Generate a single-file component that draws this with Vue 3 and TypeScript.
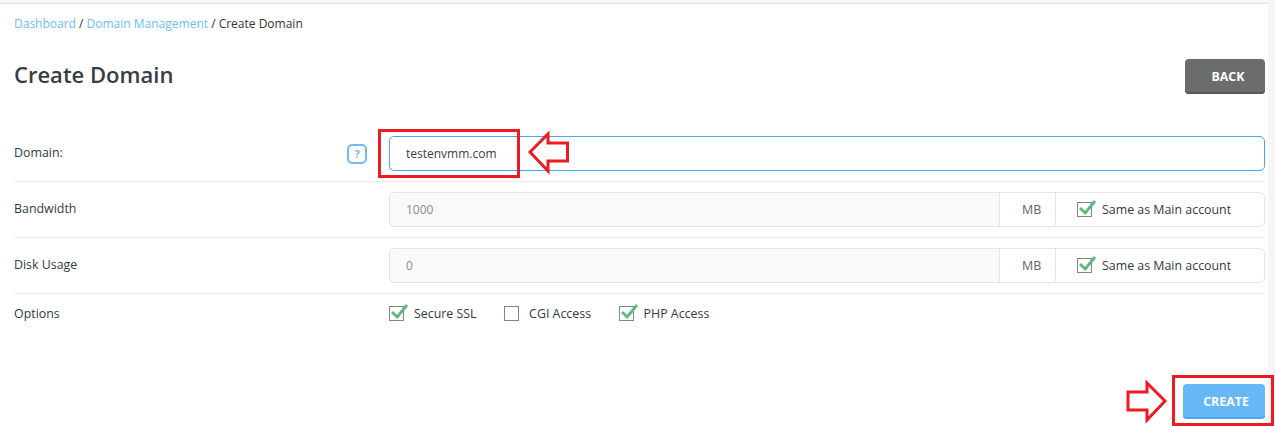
<script setup lang="ts">
interface Row { label: string; value: string }
const rows: Row[] = [
  { label: 'Bandwidth', value: '1000' },
  { label: 'Disk Usage', value: '0' },
]
const options = [
  { label: 'Secure SSL', checked: true },
  { label: 'CGI Access', checked: false },
  { label: 'PHP Access', checked: true },
]
</script>

<template>
  <div class="page">
    <main class="main">
      <nav class="crumbs"><a>Dashboard</a> / <a>Domain Management</a> / Create Domain</nav>
      <header class="head">
        <h1>Create Domain</h1>
        <button class="btn back">BACK</button>
      </header>
      <section class="form">
        <div class="row first">
          <label class="lbl">Domain:</label>
          <span class="help">?</span>
          <div class="domain">testenvmm.com</div>
        </div>
        <div v-for="r in rows" :key="r.label" class="row">
          <label class="lbl">{{ r.label }}</label>
          <div class="group">
            <div class="val">{{ r.value }}</div>
            <div class="unit">MB</div>
            <div class="same">
              <span class="cb">
                <svg class="tick" width="20" height="16" viewBox="0 0 20 16"><path d="M3 8 L8.2 13 L18 1" fill="none" stroke="#5cb97c" stroke-width="2.8"/></svg>
              </span>
              Same as Main account
            </div>
          </div>
        </div>
        <div class="row opts">
          <label class="lbl">Options</label>
          <div class="optlist">
            <div v-for="o in options" :key="o.label" class="opt">
              <span class="cb">
                <svg v-if="o.checked" class="tick" width="20" height="16" viewBox="0 0 20 16"><path d="M3 8 L8.2 13 L18 1" fill="none" stroke="#5cb97c" stroke-width="2.8"/></svg>
              </span>
              {{ o.label }}
            </div>
          </div>
        </div>
      </section>
      <footer class="foot"><button class="btn create">CREATE</button></footer>
    </main>

    <!-- annotations laid over the screenshot -->
    <div class="mark mark-domain"></div>
    <div class="mark mark-create"></div>
    <svg class="arrow arrow-left" width="44" height="44" viewBox="0 0 44 44">
      <path d="M3 21 L21 3 V12 H40.5 V30 H21 V40 Z" fill="#fff" stroke="#ed1c24" stroke-width="3"/>
    </svg>
    <svg class="arrow arrow-right" width="44" height="44" viewBox="0 0 44 44">
      <path d="M39 21 L21 3 V12 H2 V30 H21 V40 Z" fill="#fff" stroke="#ed1c24" stroke-width="3"/>
    </svg>
  </div>
</template>

<style>
html, body { margin: 0; background: #fff; }
</style>

<style scoped>
.page {
  position: relative;
  width: 1275px;
  height: 426px;
  overflow: hidden;
  background: #f6f6f6;
  font-family: "Open Sans", "Liberation Sans", sans-serif;
  color: #333a42;
}
.main {
  width: 1268px;
  height: 426px;
  box-sizing: border-box;
  background: #fff;
  margin-top: 3px;
  border-top: 1px solid #e4e4e4;
  padding: 0 3px 0 14px;
  font-size: 12px;
}
.crumbs { padding-top: 12px; line-height: 16px; font-size: 12px; color: #333; }
.crumbs a { color: #6fbcf7; }
.head {
  display: flex;
  justify-content: space-between;
  align-items: center;
  margin-top: 26px;
  height: 36px;
}
h1 { margin: 0 0 4px; font-size: 22px; font-weight: 600; color: #373d45; line-height: 32px; }
.btn {
  border: 0;
  border-radius: 4px;
  color: #fff;
  font: 700 12.4px "Open Sans", "Liberation Sans", sans-serif;
  width: 80px;
  height: 35px;
  padding: 0;
}
.back { background: #6b6d6c; box-shadow: inset 0 -2px 0 #585a59; padding-left: 6px; }
.form { margin-top: 33px; }
.row {
  display: flex;
  align-items: center;
  height: 55px;
  border-bottom: 1px solid #eaeaea;
}
.row.first { padding-top: 4px; box-sizing: border-box; height: 60px; margin-top: -5px; }
.lbl { width: 375px; flex: none; font-size: 12.4px; line-height: 16px; margin-bottom: 2px; color: #333a42; }
.first .lbl { width: 333px; }
.opts .lbl { margin-bottom: 0; margin-top: 1px; }
.help {
  box-sizing: border-box;
  width: 20px;
  height: 20px;
  margin-right: 22px;
  flex: none;
  border: 2.5px solid #6fbcf7;
  border-radius: 5px;
  color: #6fbcf7;
  font-size: 11px;
  font-weight: 700;
  line-height: 15px;
  text-align: center;
}
.domain {
  flex: 1;
  box-sizing: border-box;
  height: 35px;
  border: 1px solid #45a9f3;
  border-radius: 5px;
  padding-left: 16px;
  line-height: 33px;
  color: #3a4049;
}
.group {
  flex: 1;
  display: flex;
  height: 35px;
  box-sizing: border-box;
  border: 1px solid #e4e4e4;
  border-radius: 5px;
  line-height: 33px;
}
.val {
  flex: 1;
  background: #f9f9f9;
  color: #8b8b8b;
  padding-left: 16px;
  border-radius: 5px 0 0 5px;
}
.unit {
  width: 57px;
  box-sizing: border-box;
  border-left: 1px solid #e4e4e4;
  border-right: 1px solid #e4e4e4;
  padding-left: 22px;
  color: #5c636b;
  font-size: 12.4px;
}
.same {
  width: 208px;
  display: flex;
  align-items: center;
  padding-left: 21px;
  box-sizing: border-box;
  font-size: 12.4px;
}
.cb {
  position: relative;
  flex: none;
  box-sizing: border-box;
  width: 15px;
  height: 15px;
  border: 1px solid #7d8595;
  margin-right: 10px;
}
.tick { position: absolute; left: -1px; top: -3px; }
.opts { border-bottom: 0; height: 38px; }
.optlist { display: flex; font-size: 12.4px; }
.opt { display: flex; align-items: center; margin-right: 27.5px; }
.foot { display: flex; justify-content: flex-end; margin-top: 52px; }
.create { background: #66b9f6; box-shadow: inset 0 -2px 0 #4aa8ef; width: 82px; padding-left: 4px; }
.mark {
  position: absolute;
  box-sizing: border-box;
  border: 3px solid #ed1c24;
}
.mark-domain { left: 378px; top: 129px; width: 142px; height: 49px; }
.mark-create { left: 1172px; top: 375px; width: 102px; height: 51px; }
.arrow { position: absolute; }
.arrow-left { left: 527px; top: 131px; }
.arrow-right { left: 1126px; top: 380px; }
</style>
